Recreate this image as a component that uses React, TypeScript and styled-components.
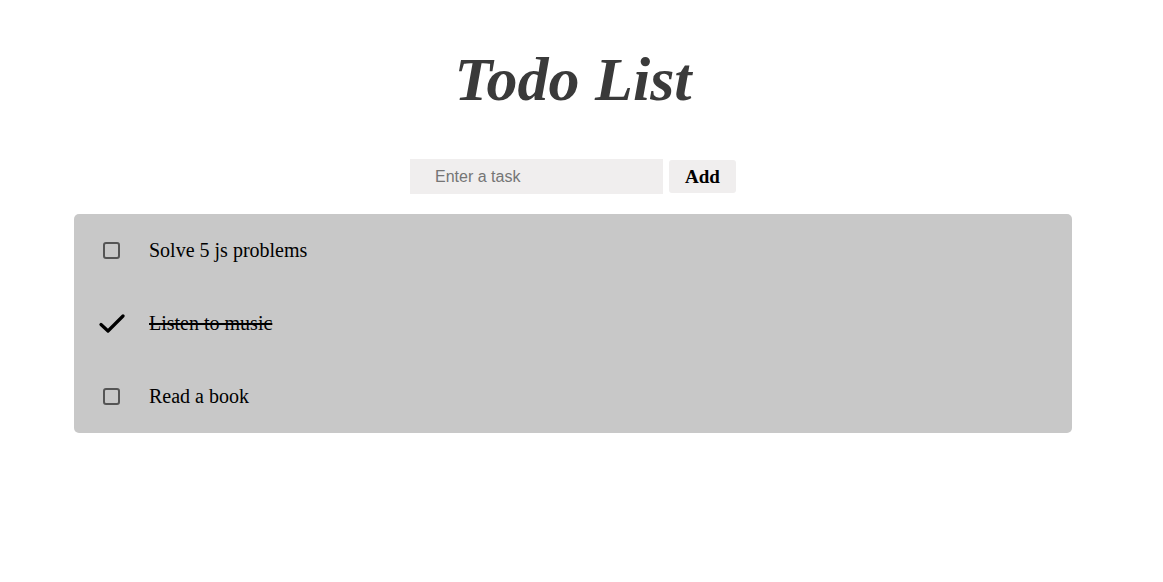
import { useState } from 'react';
import styled, { createGlobalStyle } from 'styled-components';

const GlobalStyle = createGlobalStyle`
    body {
        margin: 0;
        background: #ffffff;
        font-family: 'Liberation Serif', 'Times New Roman', serif;
    }
`;

const Page = styled.div`
    width: 1146px;
    display: flex;
    flex-direction: column;
    align-items: center;
`;

const Title = styled.h1`
    margin: 42px 0 0;
    font-size: 62px;
    font-style: italic;
    font-weight: bold;
    color: #3a3a3a;
    line-height: 74px;
`;

const Form = styled.form`
    display: flex;
    gap: 6px;
    margin-top: 43px;
`;

const Input = styled.input`
    box-sizing: border-box;
    width: 253px;
    height: 35px;
    border: 0;
    outline: none;
    background: #f0eeee;
    padding: 0 0 0 25px;
    font-family: 'Liberation Sans', Arial, sans-serif;
    font-size: 16px;
    color: #222;

    &::placeholder {
        color: #757575;
    }
`;

const AddButton = styled.button`
    width: 67px;
    height: 33px;
    margin-top: 1px;
    border: 0;
    border-radius: 3px;
    background: #f0eeee;
    font-family: 'Liberation Serif', 'Times New Roman', serif;
    font-size: 19px;
    font-weight: bold;
    color: #000;
    cursor: pointer;
`;

const List = styled.ul`
    box-sizing: border-box;
    width: 998px;
    margin: 20px 0 0;
    padding: 0;
    list-style: none;
    background: #c8c8c8;
    border-radius: 5px;
`;

const Row = styled.li`
    display: flex;
    align-items: center;
    height: 73px;
    padding-left: 29px;
    gap: 29px;
`;

const Toggle = styled.button`
    width: 17px;
    height: 17px;
    padding: 0;
    border: 0;
    background: none;
    display: flex;
    align-items: center;
    justify-content: center;
    cursor: pointer;
`;

const Box = styled.span`
    box-sizing: border-box;
    width: 17px;
    height: 17px;
    border: 2px solid #555555;
    border-radius: 3px;
`;

const Label = styled.span<{ $done: boolean }>`
    font-size: 20px;
    color: #000;
    text-decoration: ${(p) => (p.$done ? 'line-through' : 'none')};
    text-decoration-thickness: 2px;
`;

const CheckMark = () => (
    <svg width="26" height="20" viewBox="0 0 26 20" style={{ flex: 'none' }}>
        <path
            d="M2 10.5 L9 17 L24 2"
            fill="none"
            stroke="#000"
            strokeWidth="3.2"
            strokeLinecap="round"
            strokeLinejoin="round"
        />
    </svg>
);

export default function App() {
    const [todos, setTodos] = useState([
        { id: 1, text: 'Solve 5 js problems', done: false },
        { id: 2, text: 'Listen to music', done: true },
        { id: 3, text: 'Read a book', done: false },
    ]);

    const toggle = (id: number) => {
        setTodos((prev) =>
            prev.map((t) => (t.id === id ? { ...t, done: !t.done } : t)),
        );
    };

    return (
        <Page>
            <GlobalStyle />
            <Title>Todo List</Title>
            <Form onSubmit={(e) => e.preventDefault()}>
                <Input type="text" placeholder="Enter a task" />
                <AddButton>Add</AddButton>
            </Form>
            <List>
                {todos.map((todo) => (
                    <Row key={todo.id}>
                        <Toggle onClick={() => toggle(todo.id)}>
                            {todo.done ? <CheckMark /> : <Box />}
                        </Toggle>
                        <Label $done={todo.done}>{todo.text}</Label>
                    </Row>
                ))}
            </List>
        </Page>
    );
}
